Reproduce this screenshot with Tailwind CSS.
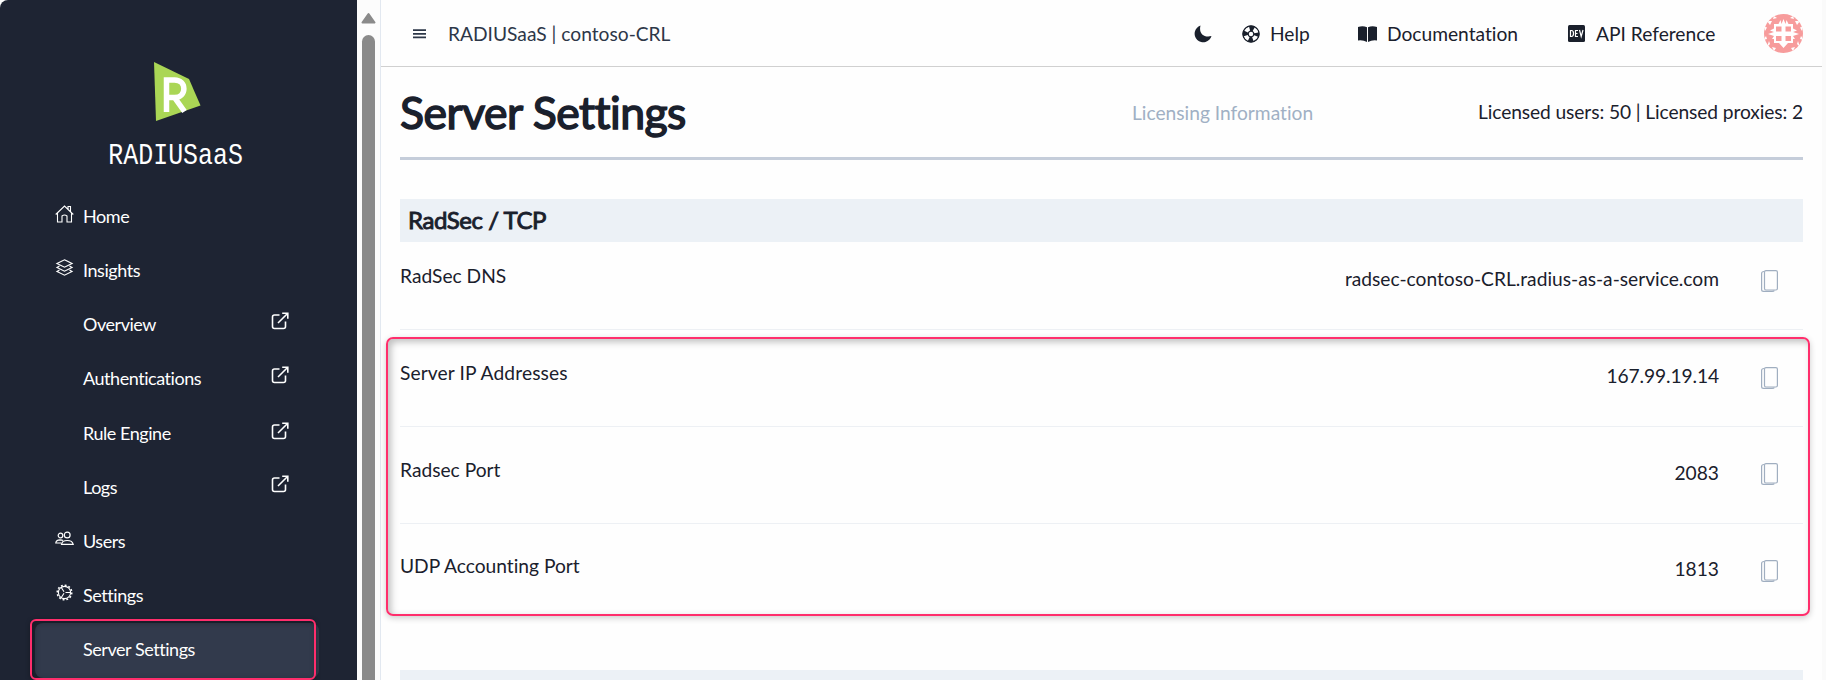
<!DOCTYPE html>
<html lang="en">
<head>
<meta charset="utf-8">
<title>Server Settings</title>
<script src="https://cdn.jsdelivr.net/npm/@tailwindcss/browser@4"></script>
</head>
<body class="bg-[#fefefe] font-['Lato',sans-serif] text-[#1a202c] [font-variant-ligatures:none]">
<svg class="hidden">
  <symbol id="ext" viewBox="0 0 18 18"><path d="M8.500 3H3.500Q1.500 3 1.500 5V14.500Q1.500 16.500 3.500 16.500H12.500Q14.500 16.500 14.500 14.500V9.500M7 11L16.300 1.700M11.200 1.200H16.800V6.800" fill="none" stroke="#fff" stroke-width="1.600"/></symbol>
  <symbol id="copy" viewBox="0 0 17 22"><rect x="3.500" y=".6" width="12.900" height="19.400" rx="1.500" fill="none" stroke="#a0aec0" stroke-width="1.200"/><path d="M3 1.500Q.6 1.500 .6 3.500V19.500Q.6 21.400 2.500 21.400H11Q13 21.400 13.300 20.500" fill="none" stroke="#a0aec0" stroke-width="1.200"/></symbol>
</svg>
<div class="relative flex h-[680px] w-[1826px] overflow-hidden">
  <aside class="h-full w-[357px] shrink-0 rounded-tl-[8px] bg-[#1e2433] text-white">
    <div class="flex h-[189px] flex-col items-center pt-[61px]">
      <svg class="ml-[-4px] h-[60px] w-[48px]" viewBox="0 0 48 60"><path d="M1 1L36 18L47.500 44.500L3 60Z" fill="#aad655"/><path d="M13.500 51V19H21.500C34 19 34 36.500 21.500 36.500H14M21.500 36.500L31.500 50.500" fill="none" stroke="#fff" stroke-width="5.500"/></svg>
      <div class="mt-[20px] ml-[-5px] origin-center scale-x-[.89] scale-y-[1.05] font-['Liberation_Mono',monospace] text-[28px] leading-[32px]">RADIUSaaS</div>
    </div>
    <nav class="text-[18px] leading-[54px] tracking-[-0.45px]">
      <div class="flex h-[54.200px] pl-[55px]"><svg class="mr-[9px] mt-[16px] h-[18px] w-[19px]" viewBox="0 0 19 18" fill="none" stroke="#fff" stroke-width="1.100"><path d="M.7 9.500L9.500 1L18.300 9.500M2.500 8V17H7V11Q9.500 9 12 11V17H16.500V8M13 4V1.500H15.500V6.500"/></svg><span>Home</span></div>
      <div class="flex h-[54.200px] pl-[55px]"><svg class="mr-[9px] mt-[16px] h-[18px] w-[19px]" viewBox="0 0 19 18" fill="none" stroke="#fff" stroke-width="1.200"><path d="M9.500 .8L17 4.500L9.500 8.200L2 4.500ZM4.500 7L2 8.500L9.500 12.200L17 8.500L14.500 7M4.500 11L2 12.500L9.500 16.200L17 12.500L14.500 11"/></svg><span>Insights</span></div>
      <div class="flex h-[54px] justify-between pl-[83px] pr-[68px]"><span>Overview</span><svg class="mt-[15px] h-[18px] w-[18px]"><use href="#ext"/></svg></div>
      <div class="flex h-[54.200px] justify-between pl-[83px] pr-[68px]"><span>Authentications</span><svg class="mt-[15px] h-[18px] w-[18px]"><use href="#ext"/></svg></div>
      <div class="flex h-[54.400px] justify-between pl-[83px] pr-[68px]"><span>Rule Engine</span><svg class="mt-[16px] h-[18px] w-[18px]"><use href="#ext"/></svg></div>
      <div class="flex h-[54.200px] justify-between pl-[83px] pr-[68px]"><span>Logs</span><svg class="mt-[15px] h-[18px] w-[18px]"><use href="#ext"/></svg></div>
      <div class="flex h-[54.200px] pl-[55px]"><svg class="mr-[9px] mt-[16px] h-[18px] w-[19px]" viewBox="0 0 19 18" fill="none" stroke="#fff" stroke-width="1.200"><circle cx="12.200" cy="5" r="2.900"/><circle cx="5.500" cy="5.500" r="2.300"/><path d="M6.500 14.400Q7 10.500 12.200 10.500T18.200 14.400ZM6 13H.8Q1 10 5 9.800Q7 9.800 8 10.500"/></svg><span>Users</span></div>
      <div class="flex h-[54.200px] pl-[55px]"><svg class="mr-[9px] mt-[16px] h-[18px] w-[19px]" viewBox="0 0 19 18" fill="none" stroke="#fff" stroke-width="1.100"><circle cx="9.500" cy="8.500" r="6.100"/><circle cx="9.500" cy="8.500" r="7.300" stroke-dasharray="1.900 1.920" stroke-width="1.500"/><path d="M10.500 8.500H15.500M9 7.700L6 3M9 9.300L6 14"/></svg><span>Settings</span></div>
      <div class="ml-[35px] h-[55px] w-[284px] rounded-[8px] bg-[#323a4c] pl-[48px] leading-[52px]">Server Settings</div>
    </nav>
  </aside>
  <div class="flex w-[24px] shrink-0 flex-col items-center border-r border-[#e2e8f0] bg-[#fcfcfc] pt-[12px]">
    <svg class="h-[12px] w-[15px] shrink-0" viewBox="0 0 15 12"><path d="M7.500 2L13.500 10.500H1.500Z" fill="#8a8a8a" stroke="#8a8a8a" stroke-width="2" stroke-linejoin="round"/></svg>
    <div class="mt-[11px] h-[660px] w-[13px] shrink-0 rounded-full bg-[#8a8a8a]"></div>
  </div>
  <main class="w-[1441px] shrink-0 text-[19.200px]">
    <header class="flex h-[67px] items-center border-b border-[#d0d0d0] pl-[32px] pr-[19px] pt-[2px]">
      <svg class="mt-[-1px] h-[10px] w-[13px]" viewBox="0 0 13 10"><path d="M0 1.200H13M0 4.800H13M0 8.400H13" stroke="#2d3748" stroke-width="1.700"/></svg>
      <span class="ml-[22px] flex-1 text-[#2d3748]">RADIUSaaS | contoso-CRL</span>
      <svg class="mt-[-1px] h-[18px] w-[18px]" viewBox="0 0 18 18"><path d="M6.500 .5C4.500 8 9.500 13 17.500 11A8.600 8.600 0 1 1 6.500 .5Z" fill="#1a202c"/></svg>
      <svg class="mt-[-1px] ml-[30px] h-[18px] w-[18px]" viewBox="0 0 18 18"><circle cx="9" cy="9" r="8.500" fill="#1a202c"/><circle cx="9" cy="9" r="5.500" fill="none" stroke="#fff" stroke-width="4" stroke-dasharray="4.400 4.240" stroke-dashoffset="-2.120"/><circle cx="9" cy="9" r="8.200" fill="none" stroke="#1a202c"/><circle cx="9" cy="9" r="2.200" fill="#fff"/></svg>
      <span class="ml-[10px] w-[88px]">Help</span>
      <svg class="mt-[-1px] h-[16px] w-[19px]" viewBox="0 0 19 16"><path d="M0 1Q5-.6 9 1.300V16Q5 13.800 0 14.500ZM10 1.300Q14-.6 19 1V14.500Q14 13.800 10 16Z" fill="#1a202c"/></svg>
      <span class="ml-[10px] w-[181px]">Documentation</span>
      <svg class="mt-[-1px] h-[17px] w-[17px]" viewBox="0 0 17 17"><rect width="17" height="17" rx="1.500" fill="#1a202c"/><path d="M2.500 5.500V11.500H3.500Q5.500 11.500 5.500 8.500T3.500 5.500ZM10 5.500H7.500V11.500H10M7.500 8.500H9.500M11.500 5L13.200 11.500L15 5" fill="none" stroke="#fff" stroke-width="1.200"/></svg>
      <span class="ml-[11px] w-[168px]">API Reference</span>
      <svg class="mt-[-2px] h-[39px] w-[39px] rounded-full" viewBox="0 0 39 39"><rect width="39" height="39" fill="#f79c9c"/><path d="M10 10H14.500L16.500 6L17.500 10L19.500 5L21.500 10L22.500 6L24.500 10H29V14.500L33 16.500L29 18L35 20L29 22L31 25H29V29H24L19.500 34L15 29H10V25H8L10 22L4 20L10 18L6 16.500L10 14.500Z" fill="#fff"/><path d="M12 12.500h5.500v5h-5.500zM21.500 12.500h5.500v5h-5.500zM12 22h5.500v5h-5.500zM21.500 22h5.500v5h-5.500z" fill="#f79c9c"/><path d="M-1 12L3 13.500L1 17M3 7L8 7L6 11M10 2L13 4L9 5M-1 26L3 25L2 22M3 33L6 30L5 27M10 37L12 34L8 33M40 12L36 13.500L38 17M36 7L31 7L33 11M29 2L26 4L30 5M40 26L36 25L37 22M36 33L33 30L34 27M29 37L27 34L31 33" fill="#fff"/></svg>
    </header>
    <section class="pl-[19px] pr-[19px]">
      <div class="flex h-[93px] items-center border-b-[3px] border-[#c5cdda]">
        <h1 class="w-[732px] text-[44.500px] leading-[60px] font-normal tracking-[-0.5px] [-webkit-text-stroke:1.500px_#1a202c]">Server Settings</h1>
        <span class="mt-[2px] flex-1 text-[#a0b0c4]">Licensing Information</span>
        <span class="tracking-[-0.1px]">Licensed users: 50 | Licensed proxies: 2</span>
      </div>
      <h2 class="mt-[39px] h-[43px] bg-[#ecf1f6] pl-[8px] text-[24px] leading-[42px] font-normal tracking-[-0.45px] [-webkit-text-stroke:.9px_#1a202c]">RadSec / TCP</h2>
      <div class="flex h-[88px] border-b border-[#edf0f4] pt-[21px]"><span class="flex-1 leading-[26px]">RadSec DNS</span><span class="mr-[42px] leading-[32px]">radsec-contoso-CRL.radius-as-a-service.com</span><svg class="mr-[25px] mt-[7px] h-[22px] w-[17px]"><use href="#copy"/></svg></div>
      <div class="flex h-[97px] border-b border-[#edf0f4] pt-[30px]"><span class="flex-1 leading-[26px] tracking-[0.120px]">Server IP Addresses</span><span class="mr-[42px] leading-[32px] tracking-[-0.1px]">167.99.19.14</span><svg class="mr-[25px] mt-[7px] h-[22px] w-[17px]"><use href="#copy"/></svg></div>
      <div class="flex h-[97px] border-b border-[#edf0f4] pt-[30px]"><span class="flex-1 leading-[26px]">Radsec Port</span><span class="mr-[42px] leading-[32px]">2083</span><svg class="mr-[25px] mt-[6px] h-[22px] w-[17px]"><use href="#copy"/></svg></div>
      <div class="flex h-[97px] pt-[29px]"><span class="flex-1 leading-[26px]">UDP Accounting Port</span><span class="mr-[42px] leading-[32px]">1813</span><svg class="mr-[25px] mt-[7px] h-[22px] w-[17px]"><use href="#copy"/></svg></div>
      <div class="mt-[49px] h-[43px] bg-[#ecf1f6]"></div>
    </section>
  </main>
  <div class="w-[4px] shrink-0 bg-[#fafafa]"></div>
  <div class="absolute left-[386px] top-[337px] h-[279px] w-[1424px] rounded-[7px] border-2 border-[#ff2e6c] shadow-[0_2px_6px_rgba(0,0,0,0.2),inset_3px_3px_7px_rgba(0,0,0,0.25)]"></div>
  <div class="absolute left-[30px] top-[619px] h-[61px] w-[286px] rounded-[6px] border-2 border-[#ff2e6c] shadow-[0_1px_5px_rgba(0,0,0,0.3),inset_2px_2px_6px_rgba(0,0,0,0.3)]"></div>
</div>
</body>
</html>
